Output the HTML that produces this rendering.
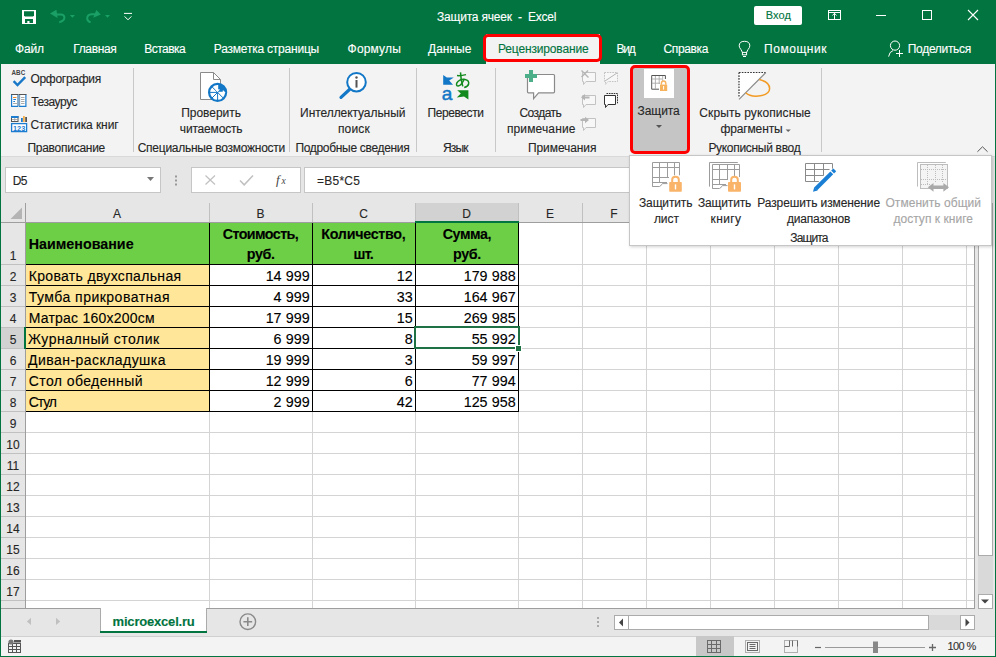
<!DOCTYPE html><html><head><meta charset="utf-8"><style>
html,body{margin:0;padding:0;width:996px;height:657px;overflow:hidden;background:#e6e6e6;font-family:"Liberation Sans",sans-serif;}
.t{position:absolute;white-space:pre;-webkit-text-stroke-width:0.12px;}
.r{position:absolute;}
</style></head><body>
<div class="r" style="left:0px;top:0px;width:996px;height:64px;background:#02743f;"></div>
<div class="t" style="left:437.00px;top:7px;font-size:12px;line-height:20px;color:#fff;letter-spacing:-0.210px;">Защита ячеек  -  Excel</div>
<div class="r" style="left:754px;top:6px;width:48px;height:19px;background:#fff;border-radius:2px;"></div>
<div class="t" style="left:765.70px;top:5px;font-size:11px;line-height:20px;color:#02743f;letter-spacing:0.147px;">Вход</div>
<div class="r" style="left:486px;top:34px;width:114px;height:30px;background:#f3f3f3;"></div>
<div class="t" style="left:15.00px;top:39px;font-size:12px;line-height:20px;color:#fff;letter-spacing:-0.173px;">Файл</div>
<div class="t" style="left:73.30px;top:39px;font-size:12px;line-height:20px;color:#fff;letter-spacing:-0.377px;">Главная</div>
<div class="t" style="left:144.30px;top:39px;font-size:12px;line-height:20px;color:#fff;letter-spacing:-0.540px;">Вставка</div>
<div class="t" style="left:213.80px;top:39px;font-size:12px;line-height:20px;color:#fff;letter-spacing:-0.215px;">Разметка страницы</div>
<div class="t" style="left:347.60px;top:39px;font-size:12px;line-height:20px;color:#fff;letter-spacing:0.167px;">Формулы</div>
<div class="t" style="left:428.00px;top:39px;font-size:12px;line-height:20px;color:#fff;letter-spacing:0.004px;">Данные</div>
<div class="t" style="left:616.50px;top:39px;font-size:12px;line-height:20px;color:#fff;letter-spacing:-1.210px;">Вид</div>
<div class="t" style="left:663.40px;top:39px;font-size:12px;line-height:20px;color:#fff;letter-spacing:-0.333px;">Справка</div>
<div class="t" style="left:764.00px;top:39px;font-size:12px;line-height:20px;color:#fff;letter-spacing:0.551px;">Помощник</div>
<div class="t" style="left:907.80px;top:39px;font-size:12px;line-height:20px;color:#fff;letter-spacing:-0.316px;">Поделиться</div>
<div class="t" style="left:498.00px;top:39px;font-size:12px;line-height:20px;color:#02743f;letter-spacing:-0.157px;">Рецензирование</div>
<div class="r" style="left:483px;top:34px;width:119px;height:28px;background:none;box-sizing:border-box;border:3px solid #f00;border-radius:5px;"></div>
<div class="r" style="left:1px;top:64px;width:994px;height:92px;background:#f3f3f3;"></div>
<div class="r" style="left:1px;top:156px;width:994px;height:1px;background:#d9d9d9;"></div>
<div class="r" style="left:133px;top:68px;width:1px;height:84px;background:#c8c8c8;"></div>
<div class="r" style="left:289px;top:68px;width:1px;height:84px;background:#c8c8c8;"></div>
<div class="r" style="left:416px;top:68px;width:1px;height:84px;background:#c8c8c8;"></div>
<div class="r" style="left:495px;top:68px;width:1px;height:84px;background:#c8c8c8;"></div>
<div class="r" style="left:821px;top:68px;width:1px;height:84px;background:#c8c8c8;"></div>
<div class="t" style="left:30.40px;top:69px;font-size:12px;line-height:20px;color:#262626;letter-spacing:-0.287px;">Орфография</div>
<div class="t" style="left:31.20px;top:92px;font-size:12px;line-height:20px;color:#262626;letter-spacing:-0.426px;">Тезаурус</div>
<div class="t" style="left:30.40px;top:115px;font-size:12px;line-height:20px;color:#262626;letter-spacing:-0.074px;">Статистика книг</div>
<div class="t" style="left:27.40px;top:138px;font-size:12px;line-height:20px;color:#262626;letter-spacing:-0.260px;">Правописание</div>
<div class="t" style="left:181.20px;top:103px;font-size:12px;line-height:20px;color:#262626;letter-spacing:-0.025px;">Проверить</div>
<div class="t" style="left:179.80px;top:119px;font-size:12px;line-height:20px;color:#262626;letter-spacing:-0.169px;">читаемость</div>
<div class="t" style="left:137.70px;top:138px;font-size:12px;line-height:20px;color:#262626;letter-spacing:-0.254px;">Специальные возможности</div>
<div class="t" style="left:300.10px;top:103px;font-size:12px;line-height:20px;color:#262626;letter-spacing:-0.068px;">Интеллектуальный</div>
<div class="t" style="left:337.90px;top:119px;font-size:12px;line-height:20px;color:#262626;letter-spacing:0.175px;">поиск</div>
<div class="t" style="left:295.40px;top:138px;font-size:12px;line-height:20px;color:#262626;letter-spacing:-0.312px;">Подробные сведения</div>
<div class="t" style="left:427.50px;top:103px;font-size:12px;line-height:20px;color:#262626;letter-spacing:-0.407px;">Перевести</div>
<div class="t" style="left:443.00px;top:138px;font-size:12px;line-height:20px;color:#262626;letter-spacing:-0.880px;">Язык</div>
<div class="t" style="left:519.50px;top:103px;font-size:12px;line-height:20px;color:#262626;letter-spacing:-0.567px;">Создать</div>
<div class="t" style="left:506.90px;top:119px;font-size:12px;line-height:20px;color:#262626;letter-spacing:0.131px;">примечание</div>
<div class="t" style="left:528.00px;top:138px;font-size:12px;line-height:20px;color:#262626;letter-spacing:-0.089px;">Примечания</div>
<div class="r" style="left:631px;top:66px;width:58px;height:87px;background:#c5c5c5;border-radius:3px;"></div>
<div class="r" style="left:644px;top:69px;width:30px;height:29px;background:#ffffff;"></div>
<div class="r" style="left:630px;top:65px;width:60px;height:89px;background:none;box-sizing:border-box;border:3px solid #f00;border-radius:5px;"></div>
<div class="t" style="left:637.60px;top:101px;font-size:12px;line-height:20px;color:#262626;letter-spacing:-0.080px;">Защита</div>
<div class="t" style="left:699.30px;top:103px;font-size:12px;line-height:20px;color:#262626;letter-spacing:0.091px;">Скрыть рукописные</div>
<div class="t" style="left:720.40px;top:119px;font-size:12px;line-height:20px;color:#262626;letter-spacing:-0.125px;">фрагменты</div>
<div class="t" style="left:708.40px;top:138px;font-size:12px;line-height:20px;color:#262626;letter-spacing:-0.307px;">Рукописный ввод</div>
<div class="r" style="left:1px;top:157px;width:994px;height:46px;background:#e6e6e6;"></div>
<div class="r" style="left:5px;top:167px;width:156px;height:26px;background:#fff;box-sizing:border-box;border:1px solid #c6c6c6;"></div>
<div class="t" style="left:12.70px;top:171px;font-size:12px;line-height:20px;color:#262626;letter-spacing:-0.660px;">D5</div>
<div class="r" style="left:191px;top:167px;width:110px;height:26px;background:#fff;box-sizing:border-box;border:1px solid #c6c6c6;"></div>
<div class="r" style="left:304px;top:167px;width:671px;height:26px;background:#fff;box-sizing:border-box;border:1px solid #c6c6c6;"></div>
<div class="t" style="left:317.00px;top:171px;font-size:12px;line-height:20px;color:#262626;letter-spacing:0.240px;">=B5*C5</div>
<div class="r" style="left:25px;top:222px;width:950px;height:386px;background:#fff;"></div>
<div class="r" style="left:1px;top:203px;width:974px;height:19px;background:#e6e6e6;"></div>
<div class="r" style="left:1px;top:222px;width:24px;height:386px;background:#e6e6e6;"></div>
<div class="r" style="left:416px;top:203px;width:102px;height:19px;background:#d2d2d2;"></div>
<div class="r" style="left:1px;top:328px;width:23px;height:20px;background:#d2d2d2;"></div>
<div class="r" style="left:25px;top:222px;width:493px;height:42px;background:#6ccf46;"></div>
<div class="r" style="left:25px;top:264px;width:184px;height:147px;background:#ffe699;"></div>
<svg class="r" style="left:0;top:0" width="996" height="657" shape-rendering="crispEdges">
<line x1="209.5" y1="222" x2="209.5" y2="608" stroke="#d4d4d4"/>
<line x1="312.5" y1="222" x2="312.5" y2="608" stroke="#d4d4d4"/>
<line x1="415.5" y1="222" x2="415.5" y2="608" stroke="#d4d4d4"/>
<line x1="518.5" y1="222" x2="518.5" y2="608" stroke="#d4d4d4"/>
<line x1="582.5" y1="222" x2="582.5" y2="608" stroke="#d4d4d4"/>
<line x1="646.5" y1="222" x2="646.5" y2="608" stroke="#d4d4d4"/>
<line x1="710.5" y1="222" x2="710.5" y2="608" stroke="#d4d4d4"/>
<line x1="774.5" y1="222" x2="774.5" y2="608" stroke="#d4d4d4"/>
<line x1="838.5" y1="222" x2="838.5" y2="608" stroke="#d4d4d4"/>
<line x1="902.5" y1="222" x2="902.5" y2="608" stroke="#d4d4d4"/>
<line x1="966.5" y1="222" x2="966.5" y2="608" stroke="#d4d4d4"/>
<line x1="25" y1="264.5" x2="975" y2="264.5" stroke="#d4d4d4"/>
<line x1="25" y1="285.5" x2="975" y2="285.5" stroke="#d4d4d4"/>
<line x1="25" y1="306.5" x2="975" y2="306.5" stroke="#d4d4d4"/>
<line x1="25" y1="327.5" x2="975" y2="327.5" stroke="#d4d4d4"/>
<line x1="25" y1="348.5" x2="975" y2="348.5" stroke="#d4d4d4"/>
<line x1="25" y1="369.5" x2="975" y2="369.5" stroke="#d4d4d4"/>
<line x1="25" y1="390.5" x2="975" y2="390.5" stroke="#d4d4d4"/>
<line x1="25" y1="411.5" x2="975" y2="411.5" stroke="#d4d4d4"/>
<line x1="25" y1="432.5" x2="975" y2="432.5" stroke="#d4d4d4"/>
<line x1="25" y1="453.5" x2="975" y2="453.5" stroke="#d4d4d4"/>
<line x1="25" y1="474.5" x2="975" y2="474.5" stroke="#d4d4d4"/>
<line x1="25" y1="495.5" x2="975" y2="495.5" stroke="#d4d4d4"/>
<line x1="25" y1="516.5" x2="975" y2="516.5" stroke="#d4d4d4"/>
<line x1="25" y1="537.5" x2="975" y2="537.5" stroke="#d4d4d4"/>
<line x1="25" y1="558.5" x2="975" y2="558.5" stroke="#d4d4d4"/>
<line x1="25" y1="579.5" x2="975" y2="579.5" stroke="#d4d4d4"/>
<line x1="25" y1="600.5" x2="975" y2="600.5" stroke="#d4d4d4"/>
<line x1="25" y1="621.5" x2="975" y2="621.5" stroke="#d4d4d4"/>
<line x1="209.5" y1="203" x2="209.5" y2="222" stroke="#c0c0c0"/>
<line x1="312.5" y1="203" x2="312.5" y2="222" stroke="#c0c0c0"/>
<line x1="415.5" y1="203" x2="415.5" y2="222" stroke="#c0c0c0"/>
<line x1="518.5" y1="203" x2="518.5" y2="222" stroke="#c0c0c0"/>
<line x1="582.5" y1="203" x2="582.5" y2="222" stroke="#c0c0c0"/>
<line x1="646.5" y1="203" x2="646.5" y2="222" stroke="#c0c0c0"/>
<line x1="710.5" y1="203" x2="710.5" y2="222" stroke="#c0c0c0"/>
<line x1="774.5" y1="203" x2="774.5" y2="222" stroke="#c0c0c0"/>
<line x1="838.5" y1="203" x2="838.5" y2="222" stroke="#c0c0c0"/>
<line x1="902.5" y1="203" x2="902.5" y2="222" stroke="#c0c0c0"/>
<line x1="966.5" y1="203" x2="966.5" y2="222" stroke="#c0c0c0"/>
<line x1="0" y1="264.5" x2="25" y2="264.5" stroke="#c0c0c0"/>
<line x1="0" y1="285.5" x2="25" y2="285.5" stroke="#c0c0c0"/>
<line x1="0" y1="306.5" x2="25" y2="306.5" stroke="#c0c0c0"/>
<line x1="0" y1="327.5" x2="25" y2="327.5" stroke="#c0c0c0"/>
<line x1="0" y1="348.5" x2="25" y2="348.5" stroke="#c0c0c0"/>
<line x1="0" y1="369.5" x2="25" y2="369.5" stroke="#c0c0c0"/>
<line x1="0" y1="390.5" x2="25" y2="390.5" stroke="#c0c0c0"/>
<line x1="0" y1="411.5" x2="25" y2="411.5" stroke="#c0c0c0"/>
<line x1="0" y1="432.5" x2="25" y2="432.5" stroke="#c0c0c0"/>
<line x1="0" y1="453.5" x2="25" y2="453.5" stroke="#c0c0c0"/>
<line x1="0" y1="474.5" x2="25" y2="474.5" stroke="#c0c0c0"/>
<line x1="0" y1="495.5" x2="25" y2="495.5" stroke="#c0c0c0"/>
<line x1="0" y1="516.5" x2="25" y2="516.5" stroke="#c0c0c0"/>
<line x1="0" y1="537.5" x2="25" y2="537.5" stroke="#c0c0c0"/>
<line x1="0" y1="558.5" x2="25" y2="558.5" stroke="#c0c0c0"/>
<line x1="0" y1="579.5" x2="25" y2="579.5" stroke="#c0c0c0"/>
<line x1="0" y1="600.5" x2="25" y2="600.5" stroke="#c0c0c0"/>
<line x1="0" y1="621.5" x2="25" y2="621.5" stroke="#c0c0c0"/>
<line x1="25.5" y1="222" x2="25.5" y2="411" stroke="#000"/>
<line x1="209.5" y1="222" x2="209.5" y2="411" stroke="#000"/>
<line x1="312.5" y1="222" x2="312.5" y2="411" stroke="#000"/>
<line x1="415.5" y1="222" x2="415.5" y2="411" stroke="#000"/>
<line x1="518.5" y1="222" x2="518.5" y2="411" stroke="#000"/>
<line x1="25" y1="222.5" x2="519" y2="222.5" stroke="#000"/>
<line x1="25" y1="264.5" x2="519" y2="264.5" stroke="#000"/>
<line x1="25" y1="285.5" x2="519" y2="285.5" stroke="#000"/>
<line x1="25" y1="306.5" x2="519" y2="306.5" stroke="#000"/>
<line x1="25" y1="327.5" x2="519" y2="327.5" stroke="#000"/>
<line x1="25" y1="348.5" x2="519" y2="348.5" stroke="#000"/>
<line x1="25" y1="369.5" x2="519" y2="369.5" stroke="#000"/>
<line x1="25" y1="390.5" x2="519" y2="390.5" stroke="#000"/>
<line x1="25" y1="411.5" x2="519" y2="411.5" stroke="#000"/>
<line x1="0" y1="222.5" x2="975" y2="222.5" stroke="#9e9e9e"/>
<line x1="25.5" y1="203" x2="25.5" y2="608" stroke="#9e9e9e"/>
<line x1="974.5" y1="203" x2="974.5" y2="609" stroke="#9e9e9e"/>
<line x1="0" y1="608.5" x2="975" y2="608.5" stroke="#9e9e9e"/>
<line x1="415" y1="222" x2="519" y2="222" stroke="#02743f" stroke-width="2"/>
<line x1="25" y1="327" x2="25" y2="349" stroke="#02743f" stroke-width="2"/>
</svg>
<div class="r" style="left:414px;top:326px;width:106px;height:23px;background:none;box-sizing:border-box;border:2px solid #1e7145;"></div>
<div class="r" style="left:516px;top:346px;width:5px;height:5px;background:#1e7145;outline:1px solid #fff;"></div>
<div class="t" style="left:87.0px;width:60px;text-align:center;top:204px;font-size:12px;line-height:20px;color:#262626;">A</div>
<div class="t" style="left:230.5px;width:60px;text-align:center;top:204px;font-size:12px;line-height:20px;color:#262626;">B</div>
<div class="t" style="left:333.5px;width:60px;text-align:center;top:204px;font-size:12px;line-height:20px;color:#262626;">C</div>
<div class="t" style="left:436.5px;width:60px;text-align:center;top:204px;font-size:12px;line-height:20px;color:#262626;">D</div>
<div class="t" style="left:520.0px;width:60px;text-align:center;top:204px;font-size:12px;line-height:20px;color:#262626;">E</div>
<div class="t" style="left:584.0px;width:60px;text-align:center;top:204px;font-size:12px;line-height:20px;color:#262626;">F</div>
<div class="t" style="left:648.0px;width:60px;text-align:center;top:204px;font-size:12px;line-height:20px;color:#262626;">G</div>
<div class="t" style="left:712.0px;width:60px;text-align:center;top:204px;font-size:12px;line-height:20px;color:#262626;">H</div>
<div class="t" style="left:776.0px;width:60px;text-align:center;top:204px;font-size:12px;line-height:20px;color:#262626;">I</div>
<div class="t" style="left:840.0px;width:60px;text-align:center;top:204px;font-size:12px;line-height:20px;color:#262626;">J</div>
<div class="t" style="left:904.0px;width:60px;text-align:center;top:204px;font-size:12px;line-height:20px;color:#262626;">K</div>
<div class="t" style="left:1.0px;width:24px;text-align:center;top:246px;font-size:12px;line-height:20px;color:#262626;">1</div>
<div class="t" style="left:1.0px;width:24px;text-align:center;top:267px;font-size:12px;line-height:20px;color:#262626;">2</div>
<div class="t" style="left:1.0px;width:24px;text-align:center;top:288px;font-size:12px;line-height:20px;color:#262626;">3</div>
<div class="t" style="left:1.0px;width:24px;text-align:center;top:309px;font-size:12px;line-height:20px;color:#262626;">4</div>
<div class="t" style="left:1.0px;width:24px;text-align:center;top:330px;font-size:12px;line-height:20px;color:#262626;">5</div>
<div class="t" style="left:1.0px;width:24px;text-align:center;top:351px;font-size:12px;line-height:20px;color:#262626;">6</div>
<div class="t" style="left:1.0px;width:24px;text-align:center;top:372px;font-size:12px;line-height:20px;color:#262626;">7</div>
<div class="t" style="left:1.0px;width:24px;text-align:center;top:393px;font-size:12px;line-height:20px;color:#262626;">8</div>
<div class="t" style="left:1.0px;width:24px;text-align:center;top:414px;font-size:12px;line-height:20px;color:#262626;">9</div>
<div class="t" style="left:1.0px;width:24px;text-align:center;top:435px;font-size:12px;line-height:20px;color:#262626;">10</div>
<div class="t" style="left:1.0px;width:24px;text-align:center;top:456px;font-size:12px;line-height:20px;color:#262626;">11</div>
<div class="t" style="left:1.0px;width:24px;text-align:center;top:477px;font-size:12px;line-height:20px;color:#262626;">12</div>
<div class="t" style="left:1.0px;width:24px;text-align:center;top:498px;font-size:12px;line-height:20px;color:#262626;">13</div>
<div class="t" style="left:1.0px;width:24px;text-align:center;top:519px;font-size:12px;line-height:20px;color:#262626;">14</div>
<div class="t" style="left:1.0px;width:24px;text-align:center;top:540px;font-size:12px;line-height:20px;color:#262626;">15</div>
<div class="t" style="left:1.0px;width:24px;text-align:center;top:561px;font-size:12px;line-height:20px;color:#262626;">16</div>
<div class="t" style="left:1.0px;width:24px;text-align:center;top:582px;font-size:12px;line-height:20px;color:#262626;">17</div>
<div class="t" style="left:28.70px;top:234px;font-size:14.3px;line-height:20px;color:#000;letter-spacing:0.001px;font-weight:bold;">Наименование</div>
<div class="t" style="left:222.70px;top:224px;font-size:14.3px;line-height:20px;color:#000;letter-spacing:-0.577px;font-weight:bold;">Стоимость,</div>
<div class="t" style="left:246.80px;top:244px;font-size:14.3px;line-height:20px;color:#000;letter-spacing:-0.372px;font-weight:bold;">руб.</div>
<div class="t" style="left:321.30px;top:224px;font-size:14.3px;line-height:20px;color:#000;letter-spacing:-0.280px;font-weight:bold;">Количество,</div>
<div class="t" style="left:353.40px;top:244px;font-size:14.3px;line-height:20px;color:#000;letter-spacing:-0.682px;font-weight:bold;">шт.</div>
<div class="t" style="left:442.70px;top:224px;font-size:14.3px;line-height:20px;color:#000;letter-spacing:-0.416px;font-weight:bold;">Сумма,</div>
<div class="t" style="left:453.00px;top:244px;font-size:14.3px;line-height:20px;color:#000;letter-spacing:-0.338px;font-weight:bold;">руб.</div>
<div class="t" style="left:28.70px;top:266px;font-size:14px;line-height:20px;color:#000;letter-spacing:0.328px;">Кровать двухспальная</div>
<div class="t" style="left:209.60000000000002px;width:100px;text-align:right;top:266px;font-size:14.3px;line-height:20px;color:#000;">14<span style="display:inline-block;width:4.2px"></span>999</div>
<div class="t" style="left:312.6px;width:100px;text-align:right;top:266px;font-size:14.3px;line-height:20px;color:#000;">12</div>
<div class="t" style="left:415.6px;width:100px;text-align:right;top:266px;font-size:14.3px;line-height:20px;color:#000;">179<span style="display:inline-block;width:4.2px"></span>988</div>
<div class="t" style="left:28.70px;top:287px;font-size:14px;line-height:20px;color:#000;letter-spacing:0.489px;">Тумба прикроватная</div>
<div class="t" style="left:209.60000000000002px;width:100px;text-align:right;top:287px;font-size:14.3px;line-height:20px;color:#000;">4<span style="display:inline-block;width:4.2px"></span>999</div>
<div class="t" style="left:312.6px;width:100px;text-align:right;top:287px;font-size:14.3px;line-height:20px;color:#000;">33</div>
<div class="t" style="left:415.6px;width:100px;text-align:right;top:287px;font-size:14.3px;line-height:20px;color:#000;">164<span style="display:inline-block;width:4.2px"></span>967</div>
<div class="t" style="left:28.70px;top:308px;font-size:14px;line-height:20px;color:#000;letter-spacing:0.227px;">Матрас 160x200см</div>
<div class="t" style="left:209.60000000000002px;width:100px;text-align:right;top:308px;font-size:14.3px;line-height:20px;color:#000;">17<span style="display:inline-block;width:4.2px"></span>999</div>
<div class="t" style="left:312.6px;width:100px;text-align:right;top:308px;font-size:14.3px;line-height:20px;color:#000;">15</div>
<div class="t" style="left:415.6px;width:100px;text-align:right;top:308px;font-size:14.3px;line-height:20px;color:#000;">269<span style="display:inline-block;width:4.2px"></span>985</div>
<div class="t" style="left:28.10px;top:329px;font-size:14px;line-height:20px;color:#000;letter-spacing:0.503px;">Журналный столик</div>
<div class="t" style="left:209.60000000000002px;width:100px;text-align:right;top:329px;font-size:14.3px;line-height:20px;color:#000;">6<span style="display:inline-block;width:4.2px"></span>999</div>
<div class="t" style="left:312.6px;width:100px;text-align:right;top:329px;font-size:14.3px;line-height:20px;color:#000;">8</div>
<div class="t" style="left:415.6px;width:100px;text-align:right;top:329px;font-size:14.3px;line-height:20px;color:#000;">55<span style="display:inline-block;width:4.2px"></span>992</div>
<div class="t" style="left:28.10px;top:350px;font-size:14px;line-height:20px;color:#000;letter-spacing:0.446px;">Диван-раскладушка</div>
<div class="t" style="left:209.60000000000002px;width:100px;text-align:right;top:350px;font-size:14.3px;line-height:20px;color:#000;">19<span style="display:inline-block;width:4.2px"></span>999</div>
<div class="t" style="left:312.6px;width:100px;text-align:right;top:350px;font-size:14.3px;line-height:20px;color:#000;">3</div>
<div class="t" style="left:415.6px;width:100px;text-align:right;top:350px;font-size:14.3px;line-height:20px;color:#000;">59<span style="display:inline-block;width:4.2px"></span>997</div>
<div class="t" style="left:28.70px;top:371px;font-size:14px;line-height:20px;color:#000;letter-spacing:0.418px;">Стол обеденный</div>
<div class="t" style="left:209.60000000000002px;width:100px;text-align:right;top:371px;font-size:14.3px;line-height:20px;color:#000;">12<span style="display:inline-block;width:4.2px"></span>999</div>
<div class="t" style="left:312.6px;width:100px;text-align:right;top:371px;font-size:14.3px;line-height:20px;color:#000;">6</div>
<div class="t" style="left:415.6px;width:100px;text-align:right;top:371px;font-size:14.3px;line-height:20px;color:#000;">77<span style="display:inline-block;width:4.2px"></span>994</div>
<div class="t" style="left:28.70px;top:392px;font-size:14px;line-height:20px;color:#000;letter-spacing:-1.090px;">Стул</div>
<div class="t" style="left:209.60000000000002px;width:100px;text-align:right;top:392px;font-size:14.3px;line-height:20px;color:#000;">2<span style="display:inline-block;width:4.2px"></span>999</div>
<div class="t" style="left:312.6px;width:100px;text-align:right;top:392px;font-size:14.3px;line-height:20px;color:#000;">42</div>
<div class="t" style="left:415.6px;width:100px;text-align:right;top:392px;font-size:14.3px;line-height:20px;color:#000;">125<span style="display:inline-block;width:4.2px"></span>958</div>
<div class="r" style="left:1px;top:609px;width:994px;height:27px;background:#e6e6e6;"></div>
<div class="r" style="left:100px;top:608px;width:107px;height:24px;background:#fff;box-sizing:border-box;border-left:1px solid #ababab;border-right:1px solid #ababab;"></div>
<div class="r" style="left:100px;top:631px;width:107px;height:2px;background:#02743f;"></div>
<div class="t" style="left:112.60px;top:612px;font-size:13px;line-height:20px;color:#02743f;letter-spacing:-0.197px;font-weight:bold;">microexcel.ru</div>
<div class="r" style="left:929px;top:615px;width:31px;height:15px;background:#d9d9d9;"></div>
<div class="r" style="left:614px;top:615px;width:15px;height:15px;background:#fff;box-sizing:border-box;border:1px solid #ababab;"></div>
<div class="r" style="left:628px;top:615px;width:301px;height:15px;background:#fff;box-sizing:border-box;border:1px solid #ababab;"></div>
<div class="r" style="left:960px;top:615px;width:15px;height:15px;background:#fff;box-sizing:border-box;border:1px solid #ababab;"></div>
<div class="r" style="left:1px;top:636px;width:994px;height:20px;background:#f3f3f3;"></div>
<div class="r" style="left:1px;top:636px;width:994px;height:1px;background:#d0d0d0;"></div>
<div class="t" style="left:947.40px;top:636px;font-size:11px;line-height:20px;color:#333;letter-spacing:-0.571px;">100 %</div>
<div class="r" style="left:975px;top:203px;width:20px;height:406px;background:#e6e6e6;"></div>
<div class="r" style="left:978px;top:555px;width:15px;height:39px;background:#d9d9d9;"></div>
<div class="r" style="left:978px;top:203px;width:15px;height:353px;background:#fff;box-sizing:border-box;border:1px solid #ababab;"></div>
<div class="r" style="left:978px;top:594px;width:15px;height:15px;background:#fff;box-sizing:border-box;border:1px solid #ababab;"></div>
<div class="r" style="left:629px;top:155px;width:363px;height:91px;background:#fff;box-sizing:border-box;border:1px solid #c6c6c6;box-shadow:1px 1px 3px rgba(0,0,0,.18);"></div>
<div class="t" style="left:639.00px;top:193px;font-size:12px;line-height:20px;color:#262626;letter-spacing:-0.146px;">Защитить</div>
<div class="t" style="left:653.90px;top:209px;font-size:12px;line-height:20px;color:#262626;letter-spacing:-0.033px;">лист</div>
<div class="t" style="left:698.00px;top:193px;font-size:12px;line-height:20px;color:#262626;letter-spacing:-0.160px;">Защитить</div>
<div class="t" style="left:710.50px;top:209px;font-size:12px;line-height:20px;color:#262626;letter-spacing:0.380px;">книгу</div>
<div class="t" style="left:757.30px;top:193px;font-size:12px;line-height:20px;color:#262626;letter-spacing:-0.114px;">Разрешить изменение</div>
<div class="t" style="left:787.00px;top:209px;font-size:12px;line-height:20px;color:#262626;letter-spacing:-0.196px;">диапазонов</div>
<div class="t" style="left:885.50px;top:193px;font-size:12px;line-height:20px;color:#a6a6a6;letter-spacing:0.040px;">Отменить общий</div>
<div class="t" style="left:893.40px;top:209px;font-size:12px;line-height:20px;color:#a6a6a6;letter-spacing:0.040px;">доступ к книге</div>
<div class="t" style="left:790.30px;top:228px;font-size:12px;line-height:20px;color:#262626;letter-spacing:-0.900px;">Защита</div>
<div class="r" style="left:0px;top:0px;width:1px;height:657px;background:#02743f;"></div>
<div class="r" style="left:995px;top:0px;width:1px;height:657px;background:#02743f;"></div>
<div class="r" style="left:0px;top:656px;width:996px;height:1px;background:#02743f;"></div>

<svg class="r" style="left:0;top:0" width="996" height="657" viewBox="0 0 996 657">
<!-- save -->
<g>
<rect x="22" y="10" width="14" height="14" fill="#fff"/>
<path d="M24 11.3 H34 V15.6 L33 16.6 H25 L24 15.6Z" fill="#02743f"/>
<rect x="25" y="19" width="8" height="4" fill="#02743f"/>
<rect x="27.3" y="21" width="2.2" height="2" fill="#fff"/>
</g>
<!-- undo -->
<g fill="#1aa066" stroke="none">
<path d="M50 13.6 L56.4 9.8 L57.6 18 Z"/>
</g>
<path d="M55 14.6 H61 Q64.4 14.8 64.4 17.8 Q64.4 20.6 59.2 22.4" fill="none" stroke="#1aa066" stroke-width="2"/>
<path d="M69.8 15 H75 L72.4 17.8Z" fill="#1aa066"/>
<!-- redo -->
<path d="M100.8 14.4 L96.3 10 L93.2 17.8 Z" fill="#1aa066"/>
<path d="M95.5 14.3 H91.5 Q87.2 14.6 87.2 18.4 Q87.2 20.8 90.6 22.4" fill="none" stroke="#1aa066" stroke-width="2"/>
<path d="M105 15 H110 L107.5 17.8Z" fill="#1aa066"/>
<!-- customize -->
<path d="M124 13.4 H132" stroke="#fff" stroke-width="1"/>
<path d="M124.6 16.4 L128 19.8 L131.4 16.4" fill="none" stroke="#fff" stroke-width="1"/>
<!-- ribbon display options -->
<rect x="828.5" y="10.5" width="12" height="9" fill="none" stroke="#fff" stroke-width="1"/>
<path d="M829 12.5 H840" stroke="#fff" stroke-width="1"/>
<path d="M834.5 13 V19.5 M832.4 15.4 L834.5 13.4 L836.6 15.4" fill="none" stroke="#fff" stroke-width="1"/>
<!-- min max close -->
<path d="M876 15.5 H886" stroke="#fff" stroke-width="1"/>
<rect x="922.5" y="10.5" width="9" height="9" fill="none" stroke="#fff" stroke-width="1"/>
<path d="M968 10 L978 20 M978 10 L968 20" stroke="#fff" stroke-width="1.1"/>
<!-- lightbulb -->
<path d="M742.4 52.4 L741 49.6 Q739.2 47.6 739.2 45.8 Q739.2 41.3 744.5 41.3 Q749.8 41.3 749.8 45.8 Q749.8 47.6 748 49.6 L746.6 52.4" fill="none" stroke="#fff" stroke-width="1"/>
<rect x="742.4" y="52.4" width="4.2" height="2.4" fill="none" stroke="#fff" stroke-width="1"/>
<path d="M743 56.5 H746" stroke="#fff" stroke-width="1"/>
<!-- person -->
<circle cx="895" cy="45.6" r="4.6" fill="none" stroke="#fff" stroke-width="1"/>
<path d="M888.6 56.6 Q889.4 51.6 893 50.6" fill="none" stroke="#fff" stroke-width="1"/>
<path d="M896 53.5 H903 M899.5 50 V57" stroke="#fff" stroke-width="1"/>

<!-- spelling -->
<text x="11.6" y="75" font-family="Liberation Sans" font-weight="bold" font-size="6.6" fill="#444" textLength="13.6" lengthAdjust="spacingAndGlyphs">ABC</text>
<path d="M13.6 81.2 L17.5 85 L25.2 77.2" fill="none" stroke="#1a78c8" stroke-width="2.4"/>
<!-- thesaurus -->
<g>
<rect x="11" y="94" width="7.5" height="13" fill="#fff"/>
<rect x="19" y="94" width="7.5" height="13" fill="#fff"/>
<path d="M11.6 94.5 V106.4 H18 M18 94.5 V106.4" fill="none" stroke="#1c7cd0" stroke-width="1.2"/>
<path d="M19.5 94.5 V106.4 H25.9 V94.5" fill="none" stroke="#1c7cd0" stroke-width="1.2"/>
<path d="M17.9 95 V106" stroke="#aaa" stroke-width="0.8"/>
<path d="M19.6 95 V106" stroke="#aaa" stroke-width="0.8"/>
<path d="M11 94.5 H18.5 M19 94.5 H26.5" stroke="#555" stroke-width="1"/>
<path d="M13 97.5 H16.5" stroke="#f08a24" stroke-width="1"/>
<path d="M13.3 99.5 H16" stroke="#1c7cd0" stroke-width="1"/>
<path d="M13.3 101.5 H15" stroke="#1c7cd0" stroke-width="1"/>
<path d="M13 103.5 H17" stroke="#aaa" stroke-width="1"/>
<path d="M21 97.5 H24.5 M21 99.5 H24.5 M21 101.5 H24.5 M21 103.5 H24.5" stroke="#aaa" stroke-width="1"/>
</g>
<!-- stats -->
<g>
<rect x="11.5" y="116.5" width="6.5" height="5" fill="#fff" stroke="#555" stroke-width="1"/>
<rect x="11" y="116" width="7.5" height="2" fill="#1c7cd0"/>
<path d="M12 119.5 H18 M14.75 118 V121" stroke="#999" stroke-width="0.8"/>
<rect x="21" y="118" width="1.8" height="4" fill="#1c7cd0"/>
<rect x="23" y="116" width="1.8" height="6" fill="#f7b04c"/>
<rect x="25.2" y="117" width="1.8" height="5" fill="#555"/>
<rect x="11.6" y="123.6" width="15" height="8" fill="#fff" stroke="#1c7cd0" stroke-width="1.3"/>
<text x="13" y="130.6" font-family="Liberation Sans" font-weight="bold" font-size="7" fill="#1c7cd0" textLength="12.2" lengthAdjust="spacingAndGlyphs">123</text>
</g>

<!-- accessibility doc -->
<path d="M200.5 72.5 H213.5 L220.5 79.5 V99.5 H200.5 Z" fill="#fff" stroke="#8a8a8a" stroke-width="1"/>
<path d="M213.5 72.5 V79.5 H220.5" fill="none" stroke="#8a8a8a" stroke-width="1"/>
<circle cx="217.6" cy="92.4" r="8.5" fill="#fff" stroke="#1277c6" stroke-width="2.2"/>
<path d="M217.6 92.4 V84.2 A8.2 8.2 0 0 1 225.8 92.4 Z" fill="#1277c6"/>
<path d="M217.6 92.4 L212 86.8 M217.6 92.4 L212 98 M217.6 92.4 V100 M217.6 92.4 L223.2 98 M217.6 92.4 L210 92.4" stroke="#1277c6" stroke-width="1"/>
<path d="M217.6 85 V91.4 M215.8 89.4 L217.6 91.2 L219.4 89.4" stroke="#fff" stroke-width="1.2" fill="none"/>
<path d="M218.6 92.4 H224.6 M222.8 90.6 L224.6 92.4 L222.8 94.2" stroke="#fff" stroke-width="1.2" fill="none"/>
<!-- smart lookup -->
<line x1="341" y1="97.4" x2="349.5" y2="89.5" stroke="#1277c6" stroke-width="3.2" stroke-linecap="round"/>
<circle cx="356.5" cy="82.2" r="9.3" fill="#fff" stroke="#1277c6" stroke-width="2"/>
<circle cx="356.5" cy="77.5" r="1.2" fill="#555"/>
<rect x="355.5" y="80" width="2" height="7.6" fill="#555"/>

<!-- translate -->
<path d="M443.2 75 L443.2 84.7 L453 84.7 L449.2 80.6 L453.8 77.4 L446.8 77.6 Z" fill="#1277c6"/>
<text x="441.8" y="100" font-family="Liberation Sans" font-size="19" fill="#1277c6" stroke="#1277c6" stroke-width="0.5">a</text>
<path d="M468.4 90.2 L468.4 99.6 L464 96.6 L456.8 97.4 L460.8 93.6 L457.2 90.2 Z" fill="#138a1e"/>
<g fill="none" stroke="#138a1e" stroke-width="1.5">
<path d="M457 75.6 Q461 76 466 74.6"/>
<path d="M460.5 72.4 Q460.8 80 462.8 86.4"/>
<path d="M464.4 78.8 Q461.6 85.6 458.2 86 Q455.8 86 456.8 83 Q459.6 79 465 79.4 Q469.4 80.2 468.6 84 Q468 86.6 464.2 87.4"/>
</g>

<!-- new comment -->
<path d="M527.5 74.5 H553.5 Q554.5 74.5 554.5 75.5 V91.8 Q554.5 92.8 553.5 92.8 H538.6 L533.6 98.6 V92.8 H528.5 Q527.5 92.8 527.5 91.8 Z" fill="#fff" stroke="#8a8a8a" stroke-width="1.2"/>
<path d="M525 74 H537 V78 H525Z M529 70 H533 V82 H529Z" fill="#4caf8a"/>
<!-- small comment icons -->
<g fill="#f7f7f7" stroke="#c2c2c2" stroke-width="1">
<path d="M582.5 72.5 H595.5 V81.5 H586 L583.5 84.5 V81.5 H582.5 Z"/>
<path d="M582.5 95.5 H595.5 V104.5 H586 L583.5 107.5 V104.5 H582.5 Z"/>
<path d="M582.5 118.5 H595.5 V127.5 H586 L583.5 130.5 V127.5 H582.5 Z"/>
</g>
<path d="M581.5 70.5 L588.5 77.5 M588 70.5 L581.5 77" stroke="#b5b5b5" stroke-width="1.4"/>
<path d="M581 97.3 L585 94 V96.4 H589.5 V98.4 H585 V100.6 Z" fill="#b5b5b5"/>
<path d="M589 120 L585 116.7 V119.1 H580.5 V121.1 H585 V123.3 Z" fill="#b5b5b5"/>
<path d="M604.5 72.5 H617.5 V81.5 H608 L605.5 84.5 V81.5 H604.5 Z" fill="#f7f7f7" stroke="#c2c2c2" stroke-width="1" stroke-dasharray="1.6 1"/>
<path d="M605 81 L617 73" stroke="#b5b5b5" stroke-width="1"/>
<path d="M606.5 93.5 H617.5 V103.5" fill="none" stroke="#333" stroke-width="1" stroke-dasharray="1.6 0.8"/>
<path d="M604.5 95.5 H615.5 V104.5 H608 L605.5 107.5 V104.5 H604.5 Z" fill="#fff" stroke="#333" stroke-width="1"/>

<!-- protect (ribbon) -->
<g>
<path d="M651.7 75.5 H665.4 V79" fill="none" stroke="#555" stroke-width="1"/>
<path d="M651.7 75.5 V89.2 H659" fill="none" stroke="#555" stroke-width="1"/>
<path d="M652 79 H662 M652 83.2 H660 M655.4 76 V89 M659.2 76 V84 M662.7 76 V81" stroke="#aaa" stroke-width="0.9"/>
<rect x="660" y="84.6" width="7.2" height="6.4" fill="#f7b25e"/>
<path d="M661.4 84.8 V83.2 Q661.4 81 663.6 81 Q665.8 81 665.8 83.2 V84.8" fill="none" stroke="#f7b25e" stroke-width="1.4"/>
<path d="M663.6 86 V89.6" stroke="#fff" stroke-width="1"/>
</g>
<!-- ink -->
<path d="M739 72.5 H765.8 L739 99.4 Z" fill="#fff"/>
<path d="M739 72.5 H765.8 M739 72.5 V96.7" fill="none" stroke="#333" stroke-width="1.2" stroke-dasharray="1.6 1.2"/>
<path d="M765.8 72.5 L739 99.4" stroke="#8a8a8a" stroke-width="1.2"/>
<path d="M759.2 79.6 Q769.6 82 769.6 88.6 Q769.6 95.6 756 96.2 Q749 96.2 745.8 92.8" fill="none" stroke="#f39a22" stroke-width="1.5"/>
<path d="M656 125 H662 L659 128Z" fill="#555"/>
<path d="M785.6 129.4 H790.8 L788.2 132Z" fill="#666"/>
<!-- collapse -->
<path d="M977.4 151.8 L982.5 146.8 L987.6 151.8" fill="none" stroke="#555" stroke-width="1"/>


<!-- popup: protect sheet -->
<g fill="none" stroke="#9c9c9c" stroke-width="1">
<path d="M652.5 186.5 V162.5 H679.5 V175.3"/>
<path d="M653 167.5 H679 M653 177.5 H669 M653 182.5 H667 M659.5 163 V182.5 M667.5 163 V178 M674.5 163 V175.3"/>
<path d="M652.5 182.5 V186.5 H659.5 Q660.5 186.5 661.5 184.5 Q662 183.6 663 183.6 H667.5"/>
</g>
<g>
<rect x="669.2" y="182" width="12.6" height="9.8" rx="0.8" fill="#f9b46a"/>
<path d="M672.2 182.4 V179.8 Q672.2 176.8 675.5 176.8 Q678.8 176.8 678.8 179.8 V182.4" fill="none" stroke="#f9b46a" stroke-width="2"/>
<path d="M675.5 184.4 V189.4" stroke="#fff" stroke-width="1.4"/>
</g>
<!-- protect workbook -->
<g fill="none" stroke="#9c9c9c" stroke-width="1">
<path d="M709.5 186.6 V162.5 H737.8"/>
<path d="M712.5 188.5 V164.5 H739.5 V177"/>
<path d="M713 169.5 H739 M713 179.5 H728 M713 184.5 H726 M719.5 165 V184.5 M727.5 165 V180 M734.5 165 V177"/>
<path d="M712.5 184.5 V188.5 H719.5 Q720.5 188.5 721.5 186.5 Q722 185.6 723 185.6 H727.5"/>
</g>
<g>
<rect x="728" y="182" width="13" height="9.8" rx="0.8" fill="#f9b46a"/>
<path d="M731.2 182.4 V179.8 Q731.2 176.8 734.5 176.8 Q737.8 176.8 737.8 179.8 V182.4" fill="none" stroke="#f9b46a" stroke-width="2"/>
<path d="M734.5 184.4 V189.4" stroke="#fff" stroke-width="1.4"/>
</g>
<!-- allow edit ranges -->
<g fill="none" stroke="#8a8a8a" stroke-width="1">
<path d="M832.5 168.7 V163.5 H805.5 V181.5 H818.8"/>
<path d="M806 169.5 H829.5 M806 175.5 H823.6 M814.5 164 V181.5 M823.5 164 V175.5"/>
</g>
<line x1="815.6" y1="189" x2="831.8" y2="172.8" stroke="#1a7fd4" stroke-width="4"/>
<path d="M813 191.8 L814.2 187.2 L817.6 190.6Z" fill="#1a7fd4"/>
<line x1="832.6" y1="172" x2="834.8" y2="169.8" stroke="#1a7fd4" stroke-width="4"/>
<!-- unshare -->
<g fill="none" stroke="#bdbdbd" stroke-width="1">
<path d="M917.5 186.6 V162.5 H945.8"/>
<rect x="920.5" y="164.5" width="27" height="24" fill="#f4f4f4"/>
<path d="M921 169.5 H947 M921 179.5 H947 M921 184.5 H930 M927.5 165 V184.5 M935.5 165 V182 M942.5 165 V182" stroke-dasharray="1 1"/>
</g>
<path d="M927.8 187.3 L933.5 182.9 V185.6 H943.4 V182.9 L949 187.3 L943.4 191.8 V189 H933.5 V191.8Z" fill="#aaa"/>

<!-- name box arrow, dots -->
<path d="M147 177 H154 L150.5 181Z" fill="#777"/>
<rect x="175" y="175.5" width="2" height="2" fill="#999"/><rect x="175" y="179.5" width="2" height="2" fill="#999"/><rect x="175" y="183.5" width="2" height="2" fill="#999"/>
<!-- X check fx -->
<path d="M205.5 175.5 L215 184.5 M215 175.5 L205.5 184.5" stroke="#c0c0c0" stroke-width="1.2"/>
<path d="M240 180.4 L244.2 184.8 L253 175.4" fill="none" stroke="#c0c0c0" stroke-width="1.5"/>
<text x="276" y="184.4" font-family="Liberation Serif" font-style="italic" font-size="13" fill="#444">f</text>
<text x="281.4" y="184.4" font-family="Liberation Serif" font-style="italic" font-size="9.5" fill="#444">x</text>

<!-- corner triangle -->
<path d="M10.5 219 L22 207.6 V219 Z" fill="#b4b4b4"/>

<!-- sheet nav -->
<path d="M31 617.8 V625 L26.8 621.4Z" fill="#c0c0c0"/>
<path d="M56 617.8 V625 L60.2 621.4Z" fill="#c0c0c0"/>
<circle cx="247.8" cy="621.7" r="7.8" fill="none" stroke="#8a8a8a" stroke-width="1.4"/>
<path d="M243.4 621.7 H252.2 M247.8 617.3 V626.1" stroke="#8a8a8a" stroke-width="1.6"/>
<rect x="597" y="617" width="2" height="2" fill="#aaa"/><rect x="597" y="621" width="2" height="2" fill="#aaa"/><rect x="597" y="625" width="2" height="2" fill="#aaa"/>
<path d="M623 618.5 V626.5 L619 622.5Z" fill="#444"/>
<path d="M965.5 618.5 V626.5 L969.5 622.5Z" fill="#444"/>
<path d="M981 599.5 H989 L985 603.5Z" fill="#444"/>

<!-- status bar icons -->
<g fill="none" stroke="#555" stroke-width="1">
<rect x="8.5" y="643.5" width="12" height="9"/>
<path d="M9 646.5 H20 M9 649.5 H20 M12.5 644 V652 M16.5 644 V652"/>
</g>
<circle cx="11" cy="642" r="2.6" fill="#777"/>
<rect x="14" y="640" width="7" height="2.5" fill="#555"/>
<rect x="696" y="636" width="38" height="20" fill="#c8c8c8"/>
<g fill="none" stroke="#6a6a6a" stroke-width="1">
<rect x="707.5" y="640.5" width="13" height="12"/>
<path d="M708 644.5 H720 M708 648.5 H720 M711.5 641 V652 M716.5 641 V652"/>
<rect x="745.5" y="640.5" width="14" height="12" stroke-dasharray="1 1"/>
<rect x="747.5" y="642.5" width="10" height="8"/>
<path d="M749.5 644.5 H755.5 M749.5 646.5 H755.5 M749.5 648.5 H755.5"/>
<path d="M784.5 640.5 H797.5 V652.5 H784.5 Z" stroke-dasharray="1 1"/>
<path d="M784.5 646.5 H789.5 M789.5 640.5 V646.5 M792.5 640.5 V646.5 M797.5 640.5 V646.5"/>
</g>
<path d="M815 647.5 H821" stroke="#666" stroke-width="1.2"/>
<path d="M825 647.5 H925" stroke="#9a9a9a" stroke-width="1"/>
<rect x="873" y="641.5" width="5" height="11.5" fill="#888"/>
<path d="M929 647.5 H936 M932.5 644 V651" stroke="#666" stroke-width="1.3"/>
</svg>

</body></html>
